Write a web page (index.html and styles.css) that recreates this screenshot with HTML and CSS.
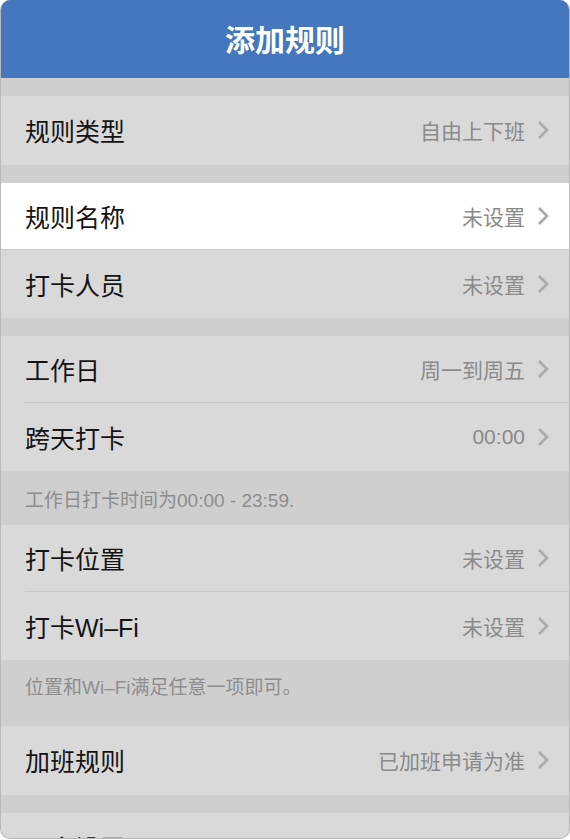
FILE: index.html
```html
<!DOCTYPE html>
<html lang="zh-CN">
<head>
  <meta charset="UTF-8" />
  <title>添加规则</title>
  <link rel="stylesheet" href="styles.css">
</head>
<body>
  <div class="panel">
    <div class="header">添加规则</div>

    <div class="group">
      <div class="row first">
        <span class="label">规则类型</span>
        <span class="value">自由上下班</span>
        <svg class="arrow" viewBox="0 0 12 20"><path d="M2 2 L10 10 L2 18" /></svg>
      </div>
    </div>

    <div class="group">
      <div class="row active">
        <span class="label">规则名称</span>
        <span class="value">未设置</span>
        <svg class="arrow" viewBox="0 0 12 20"><path d="M2 2 L10 10 L2 18" /></svg>
      </div>
      <div class="row">
        <span class="label">打卡人员</span>
        <span class="value">未设置</span>
        <svg class="arrow" viewBox="0 0 12 20"><path d="M2 2 L10 10 L2 18" /></svg>
      </div>
    </div>

    <div class="group">
      <div class="row">
        <span class="label">工作日</span>
        <span class="value">周一到周五</span>
        <svg class="arrow" viewBox="0 0 12 20"><path d="M2 2 L10 10 L2 18" /></svg>
      </div>
      <div class="row">
        <span class="label">跨天打卡</span>
        <span class="value">00:00</span>
        <svg class="arrow" viewBox="0 0 12 20"><path d="M2 2 L10 10 L2 18" /></svg>
      </div>
    </div>
    <div class="note">工作日打卡时间为00:00 - 23:59.</div>

    <div class="group flush">
      <div class="row">
        <span class="label">打卡位置</span>
        <span class="value">未设置</span>
        <svg class="arrow" viewBox="0 0 12 20"><path d="M2 2 L10 10 L2 18" /></svg>
      </div>
      <div class="row">
        <span class="label">打卡Wi–Fi</span>
        <span class="value">未设置</span>
        <svg class="arrow" viewBox="0 0 12 20"><path d="M2 2 L10 10 L2 18" /></svg>
      </div>
    </div>
    <div class="note tall">位置和Wi–Fi满足任意一项即可。</div>

    <div class="group flush">
      <div class="row first">
        <span class="label">加班规则</span>
        <span class="value">已加班申请为准</span>
        <svg class="arrow" viewBox="0 0 12 20"><path d="M2 2 L10 10 L2 18" /></svg>
      </div>
    </div>

    <div class="group">
      <div class="row">
        <span class="label">更多设置</span>
        <span class="value"></span>
        <svg class="arrow" viewBox="0 0 12 20"><path d="M2 2 L10 10 L2 18" /></svg>
      </div>
    </div>
  </div>
</body>
</html>
```

FILE: styles.css
```css
body {
  margin: 0;
  background-color: #fff;
  font-family: "Liberation Sans", "Noto Sans CJK SC", sans-serif;
}

.panel {
  box-sizing: border-box;
  height: 839px;
  border: 1px solid #b9b9b9;
  border-top: none;
  border-radius: 10px;
  overflow: hidden;
  background-color: #cfcfcf;
}

.header {
  height: 78px;
  padding-bottom: 3px;
  box-sizing: border-box;
  background-color: #4477be;
  color: #fff;
  font-size: 30px;
  font-weight: bold;
  display: flex;
  align-items: center;
  justify-content: center;
}

.group {
  margin-top: 18px;
  background-color: #d9d9d9;
}

.group.flush {
  margin-top: 0;
}

.row {
  display: flex;
  align-items: center;
  height: 66px;
  margin-left: 24px;
  padding-right: 20px;
  border-bottom: 1px solid #c6c6c6;
}

.row:last-child {
  height: 67px;
  border-bottom-color: #d9d9d9;
}

.row.first {
  height: 68px;
}

.row.active {
  background-color: #fff;
  margin-left: 0;
  padding-left: 24px;
  border-bottom-color: #c9c9c9;
}

.label {
  flex: 1;
  font-size: 25px;
  color: #141414;
}

.value {
  font-size: 21px;
  color: #8a8a8a;
}

.arrow {
  width: 12px;
  height: 20px;
  margin-left: 12px;
  fill: none;
  stroke: #ababab;
  stroke-width: 2.8;
}

.note {
  height: 54px;
  padding-left: 24px;
  display: flex;
  align-items: center;
  font-size: 19px;
  color: #8d8d8d;
}

.note.tall {
  height: 66px;
  align-items: flex-start;
  padding-top: 12px;
  box-sizing: border-box;
}
```
